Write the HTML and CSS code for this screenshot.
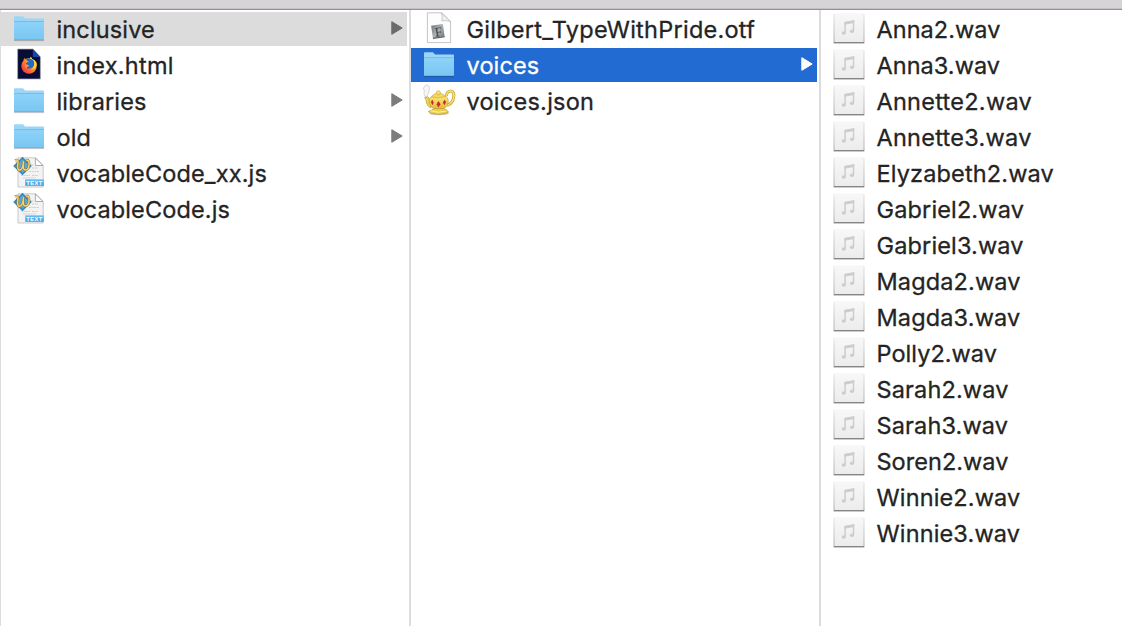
FILE: index.html
```
<!DOCTYPE html>
<html lang="en">
<head>
<meta charset="utf-8">
<title>inclusive</title>
<link rel="stylesheet" href="styles.css">
</head>
<body>
<svg class="defs" aria-hidden="true">
  <defs>
    <linearGradient id="folderFill" x1="0" y1="0" x2="0" y2="1"><stop offset="0" stop-color="#8fd3fa"/><stop offset="1" stop-color="#78c6f2"/></linearGradient>
    <linearGradient id="audioFill" x1="0" y1="0" x2="0" y2="1"><stop offset="0" stop-color="#f8f8f8"/><stop offset="1" stop-color="#ececec"/></linearGradient>
    <linearGradient id="audioEdge" x1="0" y1="0" x2="0" y2="1"><stop offset="0" stop-color="#e6e6e6"/><stop offset="1" stop-color="#ababab"/></linearGradient>
    <linearGradient id="flame" x1="1" y1="0" x2="0" y2="1"><stop offset="0" stop-color="#ffe53d"/><stop offset=".4" stop-color="#ff9a26"/><stop offset=".75" stop-color="#ff4b3b"/><stop offset="1" stop-color="#e62a72"/></linearGradient>
    <linearGradient id="metal" x1="0" y1="0" x2="1" y2="1"><stop offset="0" stop-color="#71797b"/><stop offset=".5" stop-color="#a9b3b6"/><stop offset="1" stop-color="#737b7e"/></linearGradient>
    <linearGradient id="gold" x1="0" y1="0" x2="0" y2="1"><stop offset="0" stop-color="#fbeb8a"/><stop offset=".6" stop-color="#f1d34f"/><stop offset="1" stop-color="#dfb53a"/></linearGradient>
    <linearGradient id="banner" x1="0" y1="0" x2="0" y2="1"><stop offset="0" stop-color="#6cc2f2"/><stop offset="1" stop-color="#3a9fe0"/></linearGradient>
  </defs>
  <symbol id="folder" viewBox="0 0 36 34">
    <path d="M2 28.4H32" stroke="#000" stroke-opacity=".22" stroke-width="1.4"/>
    <path d="M2 7V5.2Q2 4.2 3 4.2H10.4Q11.2 4.2 11.8 5L13 6.6H31Q32 6.6 32 7.6V12H2Z" fill="#9bd6f8"/>
    <path d="M2 9.4H32V27Q32 28 31 28H3Q2 28 2 27Z" fill="url(#folderFill)"/>
    <path d="M2 9.6H32" stroke="#67b6e2" stroke-width=".8"/>
    <path d="M2.2 27.6H31.8" stroke="#62b0dc" stroke-width=".8"/>
  </symbol>
  <symbol id="firefox" viewBox="0 0 36 34">
    <path d="M5.6 1H21L28.4 9V31H5.6Z" fill="#080d35" stroke="#a9abb8" stroke-width=".7"/>
    <path d="M20.8 1.2 28.2 9H20.8Z" fill="#0c49b5"/>
    <circle cx="17" cy="18" r="7.7" fill="url(#flame)"/>
    <path d="M11.2 12.1 13 9.8 13.4 11.6 15.4 11.4Z" fill="#ff8a28"/>
    <path d="M14 11.4Q18 8.6 21.6 12.5Q23.4 16 21 18.9Q18.5 21.4 14.2 20L12.8 18.6Q15.2 19.6 17 18.1L14 17Q13.3 15.1 15 14.4L17 13.6Q15.4 13.2 14 11.4Z" fill="#256bc4"/>
    <path d="M19.5 10.7Q22.8 12.5 22.3 17.5Q21.4 20.5 18.8 21.5Q26 20 24.5 14.5Q23.3 11.8 19.5 10.7Z" fill="#ffdc35"/>
    <path d="M12.8 16.4Q15.7 15.8 17.3 18Q14.8 18 14.7 20.4Q12.6 19.5 12.8 16.4Z" fill="#ff9827"/>
    <path d="M18.4 8.8Q20 9.6 20.3 11.4L18.1 10.7Z" fill="#ffe53d"/>
  </symbol>
  <symbol id="script" viewBox="0 0 36 34">
    <path d="M6 1.8H23.5L31.2 9.4V31H6Z" fill="#f3f3f3" stroke="#bdbdbd" stroke-width=".8"/>
    <path d="M23.4 2 31 9.5H23.4Z" fill="#fff" stroke="#999" stroke-width=".8"/>
    <path d="M19 9H22M20 12H26M9 19.5H18M20 19.5H26M11 22H24M17 15.5H27" stroke="#cfcfcf" stroke-width="1" stroke-dasharray="2 .6"/>
    <path d="M10.5 .8 19.8 10 10.5 19.2 1.2 10Z" fill="#3487c4"/>
    <path d="M10.5 3 17.4 10 10.5 17 3.6 10Z" fill="#5ba7d7"/>
    <path d="M3 4.5Q6.2 2.8 6 6L5.6 11Q5.8 15.2 8.7 13.8Q11.2 12 11.5 5.2Q10.4 13.7 13 14Q17 14 17.1 8.2Q17.3 3.2 13.9 4.2" fill="none" stroke="#80681f" stroke-width="2.4"/>
    <path d="M3 4.5Q6.2 2.8 6 6L5.6 11Q5.8 15.2 8.7 13.8Q11.2 12 11.5 5.2Q10.4 13.7 13 14Q17 14 17.1 8.2Q17.3 3.2 13.9 4.2" fill="none" stroke="#f0d779" stroke-width="1.5"/>
    <path d="M13.2 23.3H31.8V29.8H13.2Z" fill="url(#banner)"/>
  </symbol>
  <symbol id="font" viewBox="0 0 36 34">
    <path d="M5.4 .8H20L28.6 9.4V30.6H5.4Z" fill="#fdfdfd" stroke="#b8b8b8" stroke-width=".8"/>
    <path d="M19.6 1Q20.8 5 19.8 8.8Q23.8 8 28.5 9.6Z" fill="#f0f0f0" stroke="#b5b5b5" stroke-width=".7"/>
    <g transform="rotate(-8 16 19.4)">
      <path d="M10 12.8H21.8V25.6H10Z" fill="url(#metal)"/>
      <path d="M10 25H21.8V26.2H10Z" fill="#596164"/>
    </g>
  </symbol>
  <symbol id="teapot" viewBox="0 0 36 34">
    <ellipse cx="17" cy="29.6" rx="10" ry="1.6" fill="#aaa" opacity=".6"/>
    <path d="M3.3 12.7Q.9 9.8 2.4 7.2Q0 4 3 1.7Q6-.6 7.4 3Q8.2 5.4 6.4 7.2Q8.2 9 5.5 10.4L5 12.6Z" fill="#f6f6f6" stroke="#c9c9c9" stroke-width=".7"/>
    <path d="M24.4 12.2Q24.5 6.8 29 7.1Q32.8 7.4 31.6 13.5Q30.7 19.7 24.9 21.4" fill="none" stroke="#c39d2b" stroke-width="2.9"/>
    <path d="M24.4 12.2Q24.5 6.8 29 7.1Q32.8 7.4 31.6 13.5Q30.7 19.7 24.9 21.4" fill="none" stroke="#f6df67" stroke-width="1.7"/>
    <path d="M2.6 13.5 5.8 12.8 8.4 16 9 24Q4.2 22 4.1 16Z" fill="#efd258" stroke="#c39c29" stroke-width=".7"/>
    <path d="M7.5 14.4Q10 10.7 16.5 10.5Q23.6 10.7 26 15.2Q27.3 21 21.4 25.1H12Q5.8 20.6 7.5 14.4Z" fill="url(#gold)" stroke="#c49c2c" stroke-width=".7"/>
    <path d="M9.8 12.9Q11 9.4 16.4 9.3Q21.8 9.5 23.1 12.6Q16.5 14.8 9.8 12.9Z" fill="#f4dc64" stroke="#caa435" stroke-width=".6"/>
    <circle cx="16.4" cy="8.9" r="2.1" fill="#f5df6e" stroke="#c7a337" stroke-width=".6"/>
    <path d="M11.8 24.6H21.6Q24.8 25.5 26.6 28Q23.5 30.3 16.8 30.3Q9.5 30.3 6.3 27.5Q9.8 26.2 11.8 24.6Z" fill="#ecd04e" stroke="#bf982b" stroke-width=".7"/>
    <path d="M8.6 26.8Q16 29.6 24.2 27" fill="none" stroke="#fff0a4"/>
    <path d="M10.2 15.8 11.6 18.4 10.6 20.9 9 18.2ZM16.5 17.2 18.4 20.2 16.5 23.2 14.6 20.2ZM22.7 15.8 24 18.2 22.3 20.9 21 18.4Z" fill="#cc2632" stroke="#a63a2b" stroke-width=".3"/>
  </symbol>
  <symbol id="audio" viewBox="0 0 36 34">
    <path d="M1.5 2H32.5V31.4H1.5Z" fill="url(#audioEdge)"/>
    <path d="M2 30H32V31.2H2Z" fill="#868686"/>
    <path d="M2.5 1.2H31.5V30H2.5Z" fill="url(#audioFill)"/>
    <path d="M13.1 20.6V10.5L21.5 8.8V18.8" fill="none" stroke="#cdcdcd" stroke-width="1.5"/>
    <path d="M12.4 9.9 22.2 8.4V11L12.4 12.7Z" fill="#cdcdcd"/>
    <ellipse cx="11.8" cy="21" rx="2.1" ry="1.8" fill="#cdcdcd"/>
    <ellipse cx="20" cy="19.2" rx="2.1" ry="1.8" fill="#cdcdcd"/>
  </symbol>
  <symbol id="arrow" viewBox="0 0 12 14"><path d="M.8 .7 11.2 7 .8 13.3Z" fill="currentColor" stroke="currentColor" stroke-width="1" stroke-linejoin="round"/></symbol>
</svg>
<div class="browser">
  <div class="titlebar"></div>
  <main class="columns">
    <ul class="column">
      <li class="row open"><svg class="icon"><use href="#folder"/></svg><span class="name">inclusive</span><svg class="arrow"><use href="#arrow"/></svg></li>
      <li class="row"><svg class="icon"><use href="#firefox"/></svg><span class="name wide">index.html</span></li>
      <li class="row"><svg class="icon"><use href="#folder"/></svg><span class="name">libraries</span><svg class="arrow"><use href="#arrow"/></svg></li>
      <li class="row"><svg class="icon"><use href="#folder"/></svg><span class="name">old</span><svg class="arrow"><use href="#arrow"/></svg></li>
      <li class="row"><svg class="icon"><use href="#script"/><text class="banner-text" x="22.5" y="28.6" text-anchor="middle">TEXT</text></svg><span class="name">vocableCode_xx.js</span></li>
      <li class="row"><svg class="icon"><use href="#script"/><text class="banner-text" x="22.5" y="28.6" text-anchor="middle">TEXT</text></svg><span class="name">vocableCode.js</span></li>
    </ul>
    <ul class="column">
      <li class="row"><svg class="icon"><use href="#font"/><text class="type-letter" x="16.3" y="24.4" text-anchor="middle" transform="rotate(-8 16 19.4)">F</text></svg><span class="name wide">Gilbert_TypeWithPride.otf</span></li>
      <li class="row selected"><svg class="icon"><use href="#folder"/></svg><span class="name">voices</span><svg class="arrow"><use href="#arrow"/></svg></li>
      <li class="row"><svg class="icon"><use href="#teapot"/></svg><span class="name wide">voices.json</span></li>
    </ul>
    <ul class="column last">
      <li class="row"><svg class="icon"><use href="#audio"/></svg><span class="name tight">Anna2.wav</span></li>
      <li class="row"><svg class="icon"><use href="#audio"/></svg><span class="name tight">Anna3.wav</span></li>
      <li class="row"><svg class="icon"><use href="#audio"/></svg><span class="name wide">Annette2.wav</span></li>
      <li class="row"><svg class="icon"><use href="#audio"/></svg><span class="name wide">Annette3.wav</span></li>
      <li class="row"><svg class="icon"><use href="#audio"/></svg><span class="name">Elyzabeth2.wav</span></li>
      <li class="row"><svg class="icon"><use href="#audio"/></svg><span class="name">Gabriel2.wav</span></li>
      <li class="row"><svg class="icon"><use href="#audio"/></svg><span class="name">Gabriel3.wav</span></li>
      <li class="row"><svg class="icon"><use href="#audio"/></svg><span class="name">Magda2.wav</span></li>
      <li class="row"><svg class="icon"><use href="#audio"/></svg><span class="name">Magda3.wav</span></li>
      <li class="row"><svg class="icon"><use href="#audio"/></svg><span class="name tight">Polly2.wav</span></li>
      <li class="row"><svg class="icon"><use href="#audio"/></svg><span class="name">Sarah2.wav</span></li>
      <li class="row"><svg class="icon"><use href="#audio"/></svg><span class="name">Sarah3.wav</span></li>
      <li class="row"><svg class="icon"><use href="#audio"/></svg><span class="name tight">Soren2.wav</span></li>
      <li class="row"><svg class="icon"><use href="#audio"/></svg><span class="name">Winnie2.wav</span></li>
      <li class="row"><svg class="icon"><use href="#audio"/></svg><span class="name">Winnie3.wav</span></li>
    </ul>
  </main>
</div>
</body>
</html>
```
FILE: styles.css
```
* { box-sizing: border-box; }
body { margin: 0; background: #fff; font-family: Inter, "Liberation Sans", sans-serif; }
.defs { position: absolute; width: 0; height: 0; }
.browser { display: flex; flex-direction: column; width: 1122px; height: 626px; overflow: hidden; }
.titlebar { flex: none; height: 10px; background: #d6d4d6; border-bottom: 1px solid #929092; box-shadow: inset 0 -1px #c3c1c3; }
.columns { flex: 1; display: flex; border-left: 1px solid #dcdcdc; }
.column { flex: none; width: 410px; margin: 0; padding: 2px 2px 0 0; list-style: none; border-right: 2px solid #dcdcdc; }
.column.last { flex: 1; border-right: 0; }
.row { display: flex; align-items: center; height: 34px; margin-bottom: 2px; padding: 0 4px 0 11px; color: #242424; }
.open { background: #dcdcdc; }
.selected { background: #226bd3; color: #fff; }
.icon { flex: none; width: 36px; height: 34px; margin-right: 8.5px; }
.name { padding-top: 2px; font-size: 23.5px; line-height: 34px; letter-spacing: .14px; white-space: nowrap; -webkit-text-stroke: .3px currentColor; }
.name.wide { letter-spacing: .26px; }
.name.tight { letter-spacing: .04px; }
.arrow { flex: none; width: 12px; height: 14px; margin: 0 0 2px auto; color: #7c7c7c; }
.open .arrow { color: #6b6b6b; }
.selected .arrow { color: #fff; }
.banner-text { font: bold 5.8px "Liberation Sans", sans-serif; fill: #fff; letter-spacing: .4px; }
.type-letter { font: 13px "Liberation Serif", serif; fill: #343d41; }
```
